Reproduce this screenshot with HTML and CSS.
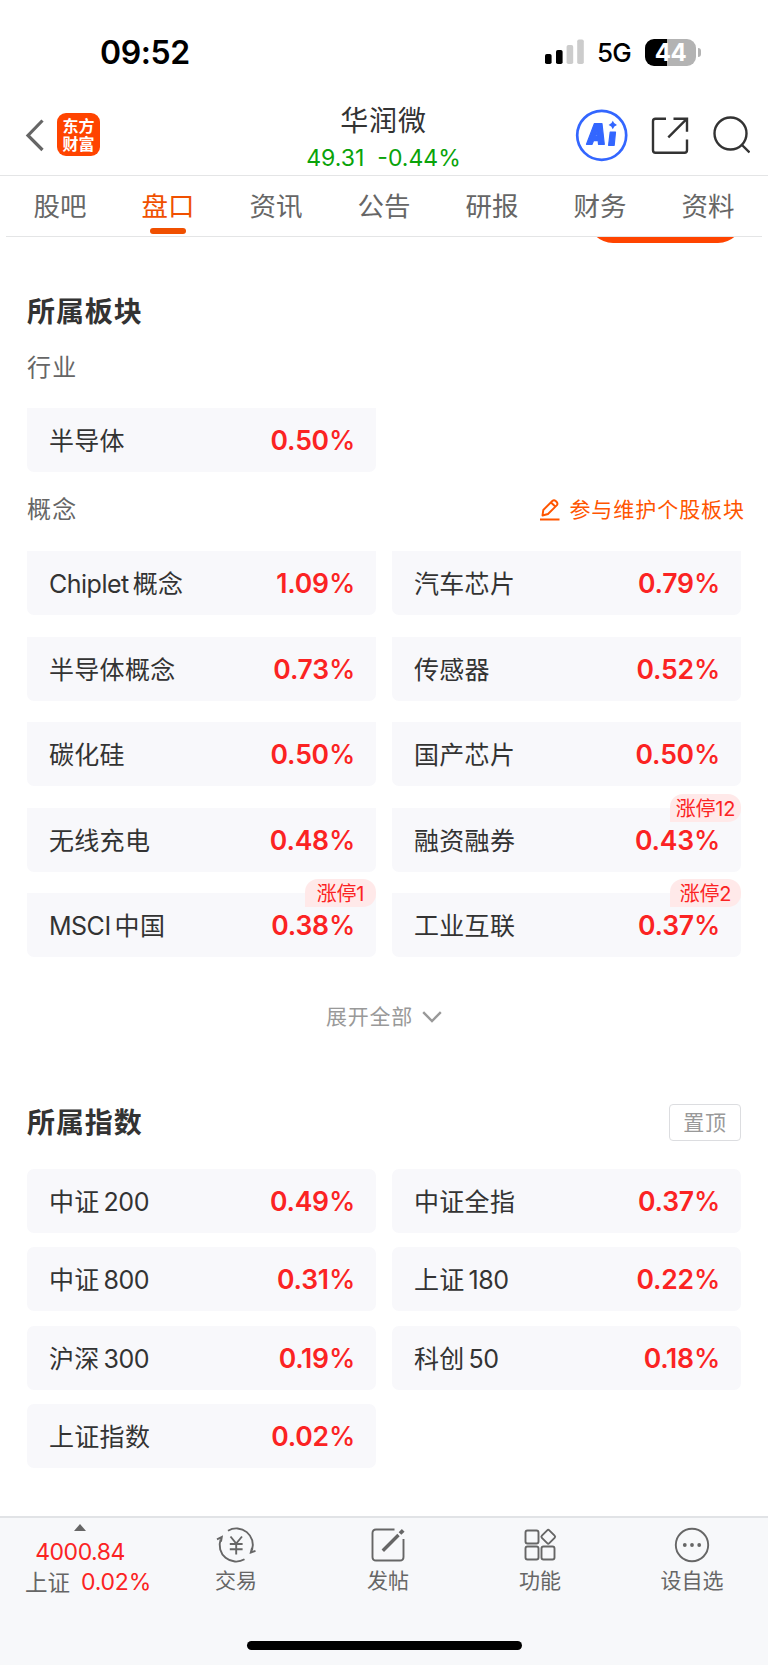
FILE: index.html
```html
<!DOCTYPE html>
<html lang="zh-CN">
<head>
<meta charset="utf-8">
<title>华润微</title>
<link rel="stylesheet" href="styles.css">
</head>
<body>
<div class="status">
  <span class="time">09:52</span>
  <div class="status-right">
    <svg class="signal" width="40" height="26" viewBox="0 0 40 26"><rect x="0" y="15" width="6.6" height="10" rx="1.8"/><rect x="11" y="11" width="6.6" height="14" rx="1.8"/><rect x="21.6" y="6" width="6.6" height="19" rx="1.8" fill="#ccc"/><rect x="32.2" y="0.5" width="6.6" height="24.5" rx="1.8" fill="#ccc"/></svg>
    <span class="net">5G</span>
    <div class="battery"><span>44</span></div><i class="tip"></i>
  </div>
</div>
<header class="header">
  <div class="header-left">
    <svg width="20" height="34" viewBox="0 0 20 34"><path d="M17.500 2.500 3 17.500 17.500 32" fill="none" stroke="#666" stroke-width="3.200"/></svg>
    <div class="logo">东方<br>财富</div>
  </div>
  <div class="stock">
    <div class="name">华润微</div>
    <div class="price"><span>49.31</span><span>-0.44%</span></div>
  </div>
  <svg class="tools" width="180" height="56" viewBox="0 0 180 56" fill="none" stroke="#333" stroke-width="2.4">
    <circle cx="31.7" cy="28.3" r="24.5" stroke="#3366ff" stroke-width="2.700"/>
    <path fill-rule="evenodd" fill="#3366ff" stroke="#3366ff" stroke-width="1.200" stroke-linejoin="round" d="M16.500 37.300 24.300 16.700h7.700l2.300 20.600h-5.800l-.3-3.700h-4.600l-1.500 3.700zM25.700 29h2l-.3-4.700zM40.200 25h5.300l-1.300 13.300h-5.600z"/>
    <path fill="#3366ff" stroke="none" d="M42.800 13.800q1 3.300 4.200 4.200-3.200.9-4.200 4.200-1-3.300-4.200-4.200 3.200-.9 4.200-4.200z"/>
    <path d="M96 11.700H85.500q-2.500 0-2.500 2.500v29q0 2.500 2.500 2.500h29q2.500 0 2.500-2.500V32.500M103.500 11.700H117v13M98.300 30.300 116.500 12.200"/>
    <circle cx="160.500" cy="26.500" r="16"/><path d="m171.500 37.500 8 8"/>
  </svg>
</header>
<nav class="tabs"><span>股吧</span><span class="on">盘口</span><span>资讯</span><span>公告</span><span>研报</span><span>财务</span><span>资料</span></nav>
<div class="peek"><div class="pill"></div></div>
<main>
  <section class="boards">
    <h2>所属板块</h2>
    <h3>行业</h3>
    <div class="grid flat">
      <div class="card"><span>半导体</span><b>0.50<i>%</i></b></div>
    </div>
    <div class="concept"><h3>概念</h3>
      <a class="edit"><svg width="22" height="24" viewBox="0 0 22 24" fill="none" stroke="#ff5500" stroke-width="1.900" stroke-linejoin="round"><path d="M1 21.500h19.500M3.500 17.500l.8-5.500L13.300 3q1.700-1.500 3.400 0l1 1q1.500 1.700 0 3.400L9 16zM12 4.500l4.500 4.300"/></svg>参与维护个股板块</a>
    </div>
    <div class="grid flat">
      <div class="card"><span><span class="latin">Chiplet</span><em>概念</em></span><b>1.09<i>%</i></b></div>
      <div class="card"><span>汽车芯片</span><b>0.79<i>%</i></b></div>
      <div class="card"><span>半导体概念</span><b>0.73<i>%</i></b></div>
      <div class="card"><span>传感器</span><b>0.52<i>%</i></b></div>
      <div class="card"><span>碳化硅</span><b>0.50<i>%</i></b></div>
      <div class="card"><span>国产芯片</span><b>0.50<i>%</i></b></div>
      <div class="card"><span>无线充电</span><b>0.48<i>%</i></b></div>
      <div class="card"><span>融资融券</span><b>0.43<i>%</i></b><div class="badge">涨停12</div></div>
      <div class="card"><span><span class="latin">MSCI</span><em>中国</em></span><b>0.38<i>%</i></b><div class="badge">涨停1</div></div>
      <div class="card"><span>工业互联</span><b>0.37<i>%</i></b><div class="badge">涨停2</div></div>
    </div>
    <div class="more">展开全部<svg width="20" height="12" viewBox="0 0 20 12"><path d="m1.200 1.200 8.800 8.800 8.800-8.800" fill="none" stroke="#999" stroke-width="2.400"/></svg></div>
  </section>
  <section>
    <div class="index-head"><h2>所属指数</h2><span class="pin">置顶</span></div>
    <div class="grid index">
      <div class="card"><span>中证<em class="latin">200</em></span><b>0.49<i>%</i></b></div>
      <div class="card"><span>中证全指</span><b>0.37<i>%</i></b></div>
      <div class="card"><span>中证<em class="latin">800</em></span><b>0.31<i>%</i></b></div>
      <div class="card"><span>上证<em class="latin">180</em></span><b>0.22<i>%</i></b></div>
      <div class="card"><span>沪深<em class="latin">300</em></span><b>0.19<i>%</i></b></div>
      <div class="card"><span>科创<em class="latin">50</em></span><b>0.18<i>%</i></b></div>
      <div class="card"><span>上证指数</span><b>0.02<i>%</i></b></div>
    </div>
  </section>
</main>
<footer class="bottom">
  <div class="bar">
    <div class="market">
      <svg width="12" height="7" viewBox="0 0 12 7"><path d="M0 7 6 0l6 7z" fill="#666"/></svg>
      <span class="pts">4000.84</span>
      <span class="row">上证<span class="up">0.02%</span></span>
    </div>
    <div class="item"><svg width="40" height="36" viewBox="0 0 40 36" fill="none" stroke="#666" stroke-width="1.900"><path d="M12 3.700A16.500 16.500 0 0 1 36 23.200M28.500 32.300A16.500 16.500 0 0 1 4.600 12.500M1 12.300 5.800 10l-.8 4.500M39.500 23.800l-4.700 1.700 1.200-4.500M14.500 9.500l5.700 7 5.800-7M20.200 16.500v11M13.800 17h12.800M13.800 22.200h12.800"/></svg><span>交易</span></div>
    <div class="item"><svg width="36" height="36" viewBox="0 0 36 36" fill="none" stroke="#666" stroke-width="1.900"><path d="M24.500 2.500H6Q2.500 2.500 2.500 6v24q0 3.500 3.500 3.500h24q3.500 0 3.500-3.500V12"/><path d="M12.800 23.700 28.500 8" stroke-width="3.400"/><path d="m30 6.500 3.200-3.200" stroke-width="3.800"/></svg><span>发帖</span></div>
    <div class="item"><svg width="36" height="36" viewBox="0 0 36 36" fill="none" stroke="#666" stroke-width="1.900"><rect x="3.500" y="3.500" width="13" height="13" rx="2"/><rect x="3.500" y="19.500" width="13" height="13" rx="2"/><rect x="19.500" y="19.500" width="13" height="13" rx="2"/><rect x="21" y="4.500" width="10.500" height="10.500" rx="1.500" transform="rotate(45 26.250 9.750)"/></svg><span>功能</span></div>
    <div class="item"><svg width="36" height="36" viewBox="0 0 36 36" fill="none" stroke="#666" stroke-width="1.900"><circle cx="18" cy="18" r="16.200"/><g fill="#666" stroke="none"><circle cx="10.800" cy="18" r="1.900"/><circle cx="18" cy="18" r="1.900"/><circle cx="25.200" cy="18" r="1.900"/></g></svg><span>设自选</span></div>
  </div>
  <div class="home"></div>
</footer>
</body>
</html>
```
FILE: styles.css
```css
* { box-sizing: border-box; margin: 0; padding: 0; }
body { width: 768px; height: 1665px; overflow: hidden; background: #fff; color: #333; font-family: Inter, "Noto Sans CJK SC", sans-serif; display: flex; flex-direction: column; }
em, i { font-style: normal; }
svg { display: block; flex: none; }
.status { height: 95px; flex: none; display: flex; justify-content: space-between; padding: 31px 67px 0 100px; color: #000; }
.time { font-size: 32px; font-weight: 600; line-height: 43px; letter-spacing: -.4px; }
.status-right { display: flex; height: 42px; align-items: center; }
.net { font-size: 26px; font-weight: 500; line-height: 42px; margin: 2px 14px 0 12px; letter-spacing: -.8px; }
.battery { width: 51px; height: 27px; border-radius: 9px; background: linear-gradient(90deg, #000 43%, #b3b3b3 43%); color: #fff; font-size: 24px; font-weight: 700; line-height: 27px; text-align: center; letter-spacing: -.5px; }
.tip { width: 3px; height: 9px; border-radius: 0 4px 4px 0; background: #b3b3b3; margin-left: 2px; }
.header { height: 81px; flex: none; border-bottom: 1px solid #e4e5e6; display: grid; grid-template-columns: 280px 207px 281px; }
.header-left { display: flex; align-items: center; padding: 0 0 1px 25px; gap: 12px; }
.logo { width: 43px; height: 43px; border-radius: 9px; background: #ff4400; color: #fff; font: 700 16px/18px "Noto Sans CJK SC", sans-serif; padding-top: 3px; text-align: center; }
.stock { text-align: center; }
.name { font-size: 28px; letter-spacing: .8px; line-height: 34px; padding-top: 9px; height: 49px; }
.price { color: #0aa30a; font-size: 23px; line-height: 29px; display: flex; justify-content: center; gap: 13px; }
.tools { margin: 12px 0 0 83px; }
.tabs { height: 61px; flex: none; margin: 0 6px; border-bottom: 1px solid #e4e5e6; display: grid; grid-template-columns: repeat(7, 108px); justify-content: center; color: #666; font-size: 26.500px; text-align: center; }
.tabs span { display: flex; flex-direction: column; align-items: center; height: 60px; line-height: 61px; }
.tabs .on { color: #f05000; }
.on::after { content: ""; width: 36px; height: 6px; border-radius: 3px; background: #f05000; margin-top: -9px; flex: none; }
.peek { height: 6px; flex: none; overflow: hidden; display: flex; justify-content: flex-end; align-items: flex-end; padding-right: 25px; }
.pill { width: 155px; height: 50px; border-radius: 25px; background: #ff4400; flex: none; }
main { padding: 0 27px; flex: 1; }
h2 { font-size: 28px; font-weight: 700; letter-spacing: .9px; line-height: 40px; }
h3 { font-size: 24px; font-weight: 400; letter-spacing: 1.200px; color: #666; line-height: 36px; }
.boards { padding-top: 49px; }
.boards > h2 { height: 58px; }
.boards > h3 { height: 58px; }
.grid { display: grid; grid-template-columns: 349px 349px; column-gap: 16px; row-gap: 21.600px; }
.card { height: 64px; border-radius: 7px; background: #f8f8fb; padding: 0 21px 2px 22px; display: flex; justify-content: space-between; align-items: center; position: relative; font-size: 25px; }
.flat .card { border-radius: 0 0 7px 7px; }
.card span { letter-spacing: .3px; }
.card em { margin-left: 4px; }
.card .latin { letter-spacing: -.5px; }
.card b { color: #fb2323; font-size: 26.500px; font-weight: 600; letter-spacing: -.2px; padding-top: 2px; }
.card b i { font-weight: 500; }
.badge { position: absolute; right: 0; top: -14px; width: 71px; height: 28px; border-radius: 13px 13px 13px 0; background: #ffe9e9; color: #fb2323; font-size: 20px; line-height: 30px; text-align: center; letter-spacing: -.2px; }
.concept { height: 79px; display: flex; justify-content: space-between; padding: 20px 0 0; margin-right: -4px; }
.edit { color: #ff5500; font-size: 21px; letter-spacing: .95px; line-height: 36px; display: flex; gap: 8px; height: 36px; align-items: center; }
.more { margin-top: 43.600px; height: 32px; color: #999; font-size: 21px; letter-spacing: .7px; line-height: 32px; display: flex; justify-content: center; align-items: center; gap: 9px; }
.index-head { margin-top: 71px; height: 65px; display: flex; justify-content: space-between; }
.index-head h2 { line-height: 38px; }
.pin { width: 72px; height: 37px; border: 1.500px solid #dcdde0; border-radius: 4px; color: #999; font-size: 21px; letter-spacing: .7px; line-height: 35px; text-align: center; }
.index { row-gap: 14.500px; }
.bottom { height: 149px; flex: none; background: #f7f8fa; border-top: 2px solid #e1e3e6; color: #666; }
.bar { display: grid; grid-template-columns: 160px 152px 152px 152px 152px; height: 123px; }
.market { display: flex; flex-direction: column; align-items: center; padding-top: 6px; font-size: 23px; }
.pts { color: #fb2323; line-height: 28px; margin-top: 7px; letter-spacing: -.5px; }
.row { display: flex; gap: 11px; line-height: 33px; font-size: 22.500px; margin-left: 16px; }
.up { color: #fb2323; font-size: 23px; letter-spacing: -.2px; }
.item { display: flex; flex-direction: column; align-items: center; padding-top: 9px; font-size: 21px; }
.item span { line-height: 32px; margin-top: 2px; }
.home { width: 275px; height: 9px; border-radius: 5px; background: #000; margin: 0 auto; }
```
